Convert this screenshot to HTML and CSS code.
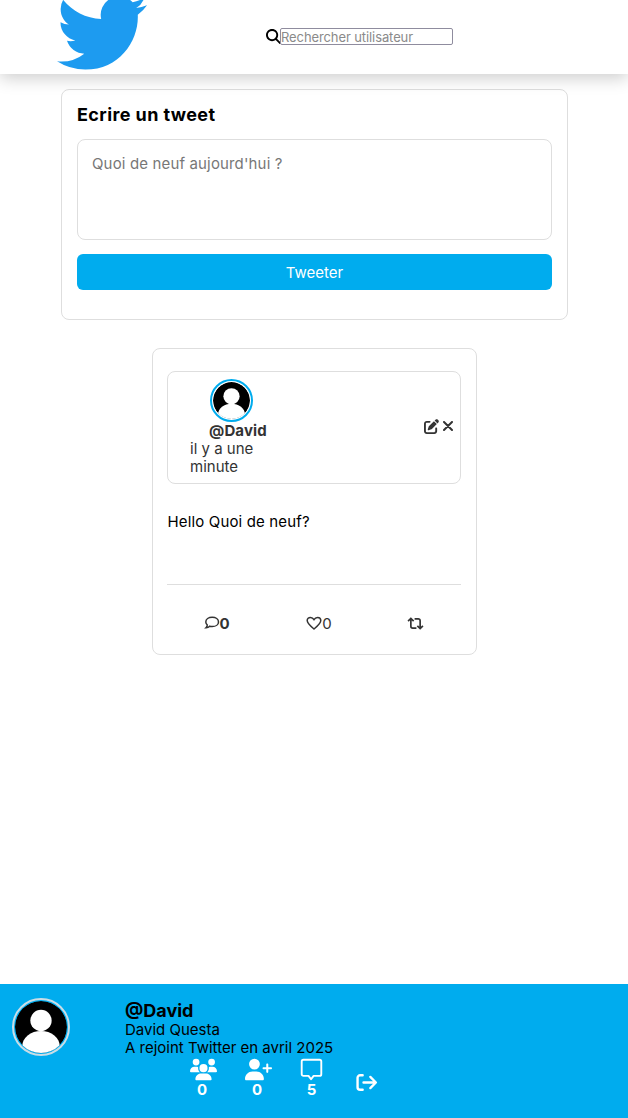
FILE: index.html
```html
<!DOCTYPE html>
<html lang="fr">
<head>
  <meta charset="UTF-8">
  <meta name="viewport" content="width=device-width, initial-scale=1.0">
  <title>Twitter</title>
  <link rel="stylesheet" href="styles.css">
</head>
<body>
  <header class="topbar">
    <svg class="logo" viewBox="0 0 24 24"><path fill="#1d9bf0" d="M23.953 4.57a10 10 0 01-2.825.775 4.958 4.958 0 002.163-2.723c-.951.555-2.005.959-3.127 1.184a4.92 4.92 0 00-8.384 4.482C7.69 8.095 4.067 6.13 1.64 3.162a4.822 4.822 0 00-.666 2.475c0 1.71.87 3.213 2.188 4.096a4.904 4.904 0 01-2.228-.616v.06a4.923 4.923 0 003.946 4.827 4.996 4.996 0 01-2.212.085 4.936 4.936 0 004.604 3.417 9.867 9.867 0 01-6.102 2.105c-.39 0-.779-.023-1.17-.067a13.995 13.995 0 007.557 2.209c9.053 0 13.998-7.496 13.998-13.985 0-.21 0-.42-.015-.63A9.935 9.935 0 0024 4.59z"/></svg>
    <form class="search">
      <svg class="search-icon" viewBox="0 0 512 512"><path d="M416 208c0 45.9-14.9 88.3-40 122.7L502.6 457.4c12.5 12.5 12.5 32.8 0 45.3s-32.8 12.5-45.3 0L330.7 376c-34.4 25.2-76.8 40-122.7 40C93.1 416 0 322.9 0 208S93.1 0 208 0S416 93.1 416 208zM208 352a144 144 0 1 0 0-288 144 144 0 1 0 0 288z"/></svg>
      <input type="text" class="search-input" placeholder="Rechercher utilisateur">
    </form>
  </header>

  <main class="content">
    <section class="compose">
      <h2 class="compose-title">Ecrire un tweet</h2>
      <textarea class="compose-text" placeholder="Quoi de neuf aujourd'hui ?"></textarea>
      <button class="compose-btn" type="button">Tweeter</button>
    </section>

    <article class="tweet">
      <div class="tweet-head">
        <div class="tweet-author">
          <svg class="avatar avatar-small" viewBox="0 0 40 40"><circle cx="20" cy="20" r="20" fill="#000"/><circle cx="20" cy="15.5" r="8.8" fill="#fff"/><ellipse cx="20" cy="35" rx="14.5" ry="11.5" fill="#fff"/></svg>
          <span class="tweet-user">@David</span>
          <span class="tweet-date">il y a une minute</span>
        </div>
        <div class="tweet-tools">
          <svg class="tool-edit" viewBox="0 0 512 512"><path d="M471.6 21.7c-21.9-21.9-57.3-21.9-79.2 0L362.3 51.7l97.9 97.9 30.1-30.1c21.9-21.9 21.9-57.3 0-79.2L471.6 21.7zm-299.2 220c-6.1 6.1-10.8 13.6-13.5 21.9l-29.6 88.8c-2.9 8.6-.6 18.1 5.8 24.6s15.9 8.7 24.6 5.8l88.8-29.6c8.2-2.7 15.7-7.4 21.9-13.5L437.7 172.3 339.7 74.3 172.4 241.7zM96 64C43 64 0 107 0 160V416c0 53 43 96 96 96H352c53 0 96-43 96-96V320c0-17.7-14.3-32-32-32s-32 14.3-32 32v96c0 17.7-14.3 32-32 32H96c-17.7 0-32-14.3-32-32V160c0-17.7 14.3-32 32-32h96c17.7 0 32-14.3 32-32s-14.3-32-32-32H96z"/></svg>
          <svg class="tool-close" viewBox="0 0 10 10"><path d="M1 1l8 8M9 1l-8 8"/></svg>
        </div>
      </div>
      <p class="tweet-body">Hello Quoi de neuf?</p>
      <div class="tweet-actions">
        <span class="action action-comment">
          <svg class="action-icon" viewBox="0 0 16 16"><path d="M8.2 2.2c3.6 0 6.3 2 6.3 4.7s-2.7 4.7-6.3 4.7c-.9 0-1.7-.1-2.5-.4-.8.8-2 1.400-3.700 1.500.7-.7 1.200-1.600 1.300-2.700C2.500 9.200 1.800 8.100 1.800 6.900c0-2.700 2.800-4.700 6.400-4.700z"/></svg>0
        </span>
        <span class="action action-like">
          <svg class="action-icon" viewBox="0 0 16 16"><path d="M8 14C4 10.800 1.200 8.400 1.200 5.600 1.200 3.700 2.600 2.400 4.400 2.400c1.500 0 2.800.8 3.600 2.200.8-1.400 2.100-2.200 3.600-2.200 1.800 0 3.200 1.300 3.200 3.200C14.800 8.400 12 10.800 8 14z"/></svg>0
        </span>
        <span class="action action-retweet">
          <svg class="action-icon retweet" viewBox="0 0 18 14"><path d="M1 4.500l3-3 3 3M4 2v8a2 2 0 0 0 2 2h4M17 9.500l-3 3-3-3M14 12V4a2 2 0 0 0-2-2H8"/></svg>
        </span>
      </div>
    </article>
  </main>

  <footer class="profile">
    <div class="profile-top">
      <svg class="avatar avatar-big" viewBox="0 0 40 40"><circle cx="20" cy="20" r="20" fill="#000"/><circle cx="20" cy="15" r="8.200" fill="#fff"/><ellipse cx="20" cy="35" rx="14.500" ry="12" fill="#fff"/></svg>
      <div class="profile-info">
        <strong class="profile-user">@David</strong>
        <span>David Questa</span>
        <span>A rejoint Twitter en avril 2025</span>
      </div>
    </div>
    <div class="stats">
      <div class="stat">
        <svg class="stat-icon" viewBox="0 0 640 512"><path d="M144 0a80 80 0 1 1 0 160A80 80 0 1 1 144 0zM512 0a80 80 0 1 1 0 160A80 80 0 1 1 512 0zM0 298.700C0 239.800 47.800 192 106.700 192h42.700c15.900 0 31 3.500 44.600 9.700c-1.300 7.200-1.900 14.700-1.900 22.300c0 38.200 16.800 72.500 43.300 96c-.2 0-.4 0-.7 0H21.300C9.600 320 0 310.400 0 298.700zM405.300 320c-.2 0-.4 0-.7 0c26.600-23.500 43.300-57.800 43.300-96c0-7.600-.7-15-1.900-22.300c13.600-6.300 28.700-9.700 44.600-9.700h42.700C592.200 192 640 239.800 640 298.700c0 11.800-9.600 21.300-21.300 21.300H405.300zM224 224a96 96 0 1 1 192 0 96 96 0 1 1 -192 0zM128 485.300C128 411.700 187.700 352 261.300 352H378.700C452.300 352 512 411.700 512 485.300c0 14.700-11.900 26.700-26.700 26.700H154.700c-14.700 0-26.700-11.900-26.700-26.700z"/></svg>
        <span class="stat-count">0</span>
      </div>
      <div class="stat">
        <svg class="stat-icon" viewBox="0 0 640 512"><path d="M96 128a128 128 0 1 1 256 0A128 128 0 1 1 96 128zM0 482.300C0 383.800 79.800 304 178.300 304h91.400C368.200 304 448 383.800 448 482.300c0 16.400-13.300 29.700-29.700 29.700H29.700C13.300 512 0 498.700 0 482.300zM504 312V248H440c-13.300 0-24-10.700-24-24s10.700-24 24-24h64V136c0-13.300 10.700-24 24-24s24 10.700 24 24v64h64c13.300 0 24 10.700 24 24s-10.700 24-24 24H552v64c0 13.300-10.700 24-24 24s-24-10.700-24-24z"/></svg>
        <span class="stat-count">0</span>
      </div>
      <div class="stat stat-tweets">
        <svg class="stat-icon stat-line" viewBox="0 0 27 27"><path d="M4 2h19a2 2 0 0 1 2 2v15a2 2 0 0 1-2 2h-7l-3 4-3-4H4a2 2 0 0 1-2-2V4a2 2 0 0 1 2-2z"/></svg>
        <span>5</span>
      </div>
      <div class="stat">
        <svg class="stat-icon stat-line logout" viewBox="0 0 27 27"><path d="M9 5H6a3 3 0 0 0-3 3v11a3 3 0 0 0 3 3h3M10 13.500h14M18 7l6.500 6.500L18 20"/></svg>
      </div>
    </div>
  </footer>
</body>
</html>
```

FILE: styles.css
```css
/* General Styles */
* {
  box-sizing: border-box;
}

body {
  font-family: 'Inter', sans-serif;
  background-color: #fff;
  color: #000;
  margin: 0;
  min-height: 100vh;
  display: flex;
  flex-direction: column;
}

/* Top bar */
.topbar {
  height: 74px;
  padding-left: 57px;
  display: flex;
  align-items: flex-start;
  overflow: hidden;
  background-color: #fff;
  box-shadow: 0 4px 16px rgba(0, 0, 0, 0.2);
  position: relative;
}

.logo {
  width: 90px;
  height: 90px;
  margin-top: -12px;
  flex-shrink: 0;
}

.search {
  display: flex;
  align-items: center;
  margin: 28px 0 0 119px;
}

.search-icon {
  width: 15px;
  height: 15px;
  margin-right: -1px;
}

.search-input {
  width: 173px;
  height: 17px;
  padding: 0;
  border: 1px solid #8f8c9e;
  border-radius: 2px;
  font-family: 'Inter', sans-serif;
  font-size: 13px;
  letter-spacing: -0.1px;
}

.search-input::placeholder {
  color: #8a8a8a;
}

/* Main column */
.content {
  display: flex;
  flex-direction: column;
  align-items: center;
  padding-top: 15px;
}

.compose {
  width: 507px;
  height: 231px;
  margin-left: 1px;
  padding: 14px 15px 15px;
  border: 1px solid #dedede;
  border-radius: 8px;
}

.compose-title {
  margin: 0 0 13px;
  font-size: 18px;
  line-height: 22px;
  font-weight: 700;
  letter-spacing: 0.4px;
}

.compose-text {
  display: block;
  width: 100%;
  height: 101px;
  padding: 14px;
  border: 1px solid #dedede;
  border-radius: 8px;
  font-family: 'Inter', sans-serif;
  font-size: 15px;
  letter-spacing: 0.15px;
  resize: none;
}

.compose-text::placeholder {
  color: #777;
}

.compose-btn {
  display: block;
  width: 100%;
  height: 36px;
  margin-top: 14px;
  border: none;
  border-radius: 6px;
  background-color: #00acee;
  color: #fff;
  font-family: 'Inter', sans-serif;
  font-size: 15px;
  cursor: pointer;
}

/* Tweet */
.tweet {
  width: 325px;
  height: 307px;
  margin-top: 28px;
  padding: 22px 15px 0 14px;
  border: 1px solid #dedede;
  border-radius: 8px;
}

.tweet-head {
  height: 113px;
  padding: 7px 6px 0 22px;
  display: flex;
  justify-content: space-between;
  border: 1px solid #dedede;
  border-radius: 8px;
}

.tweet-author {
  width: 90px;
  padding-left: 0.5px;
  display: flex;
  flex-direction: column;
  color: #333;
}

.avatar {
  border-radius: 50%;
  flex-shrink: 0;
}

.avatar-small {
  width: 43px;
  height: 43px;
  margin-left: 19.5px;
  border: 2px solid #00acee;
  padding: 1px;
}

.tweet-user {
  margin: 0 0 0 19px;
  font-size: 15px;
  line-height: 18px;
  font-weight: 700;
  letter-spacing: 0.15px;
  white-space: nowrap;
}

.tweet-date {
  font-size: 15px;
  line-height: 18px;
}

.tweet-tools {
  display: flex;
  align-items: center;
  gap: 3px;
  margin: 39px 1px 0 0;
  height: 16px;
}

.tool-edit {
  width: 15px;
  height: 15px;
  fill: #333;
}

.tool-close {
  width: 10px;
  height: 10px;
  margin-left: 1px;
  fill: none;
  stroke: #333;
  stroke-width: 2;
  stroke-linecap: round;
}

.tweet-body {
  margin: 29px 0 0 1px;
  height: 71px;
  font-size: 15px;
  line-height: 18px;
  letter-spacing: 0.15px;
}

.tweet-actions {
  padding-top: 28px;
  display: flex;
  border-top: 1px solid #dedede;
  color: #333;
  font-size: 15px;
}

.action {
  flex: 1;
  height: 20px;
  display: flex;
  justify-content: center;
  align-items: center;
}

.action-comment {
  padding-left: 5px;
  font-weight: 700;
}

.action-like {
  padding-left: 12px;
}

.action-retweet {
  padding-left: 6px;
}

.action-icon {
  width: 16px;
  height: 16px;
  fill: none;
  stroke: #333;
  stroke-width: 1.5;
}

.retweet {
  width: 17px;
  height: 13px;
  stroke-width: 1.8;
}

/* Footer */
.profile {
  height: 134px;
  margin-top: auto;
  padding: 14px 0 0 12px;
  background-color: #00acee;
}

.profile-top {
  display: flex;
  gap: 55px;
}

.avatar-big {
  width: 58px;
  height: 58px;
  border: 2px solid #c9dde6;
  padding: 1px;
}

.profile-info {
  padding-top: 3px;
  display: flex;
  flex-direction: column;
  font-size: 15px;
  line-height: 18px;
}

.profile-user {
  font-size: 18px;
  line-height: 20px;
}

.stats {
  display: flex;
  gap: 28px;
  margin: 1px 0 0 178px;
}

.stat {
  width: 27px;
  display: flex;
  flex-direction: column;
  align-items: center;
  color: #fff;
  font-size: 15px;
  line-height: 18px;
  font-weight: 700;
}

.stat-count {
  margin-right: 3px;
}

.stat-tweets {
  margin-left: -2px;
}

.stat-icon {
  width: 27px;
  height: 23px;
  fill: #fff;
}

.stat-line {
  fill: none;
  stroke: #fff;
  stroke-width: 2.2;
  stroke-linecap: round;
  stroke-linejoin: round;
}

.logout {
  margin-top: 13px;
  stroke-width: 2.8;
}
```
